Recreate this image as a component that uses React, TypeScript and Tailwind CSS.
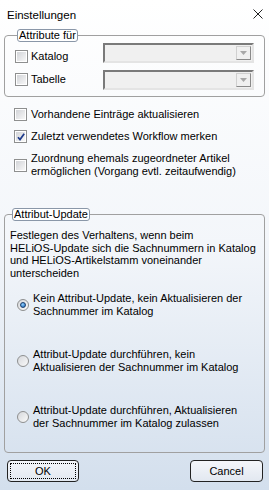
import React from "react";

function Check({ checked = false }: { checked?: boolean }) {
  return (
    <span className="relative flex h-[13px] w-[13px] shrink-0 items-center justify-center border border-[#8e8f8f] bg-white">
      <span className="h-[9px] w-[9px] bg-gradient-to-br from-[#d2d4d8] to-[#f7f7f7]" />
      {checked && (
        <svg className="absolute left-[1px] top-[1px]" width="10" height="10" viewBox="0 0 10 10">
          <path d="M2 5.2 L4 7.6 L8.2 1.8" fill="none" stroke="#1d3a8a" strokeWidth="1.7" />
        </svg>
      )}
    </span>
  );
}

function Radio({ checked = false }: { checked?: boolean }) {
  return (
    <span className="flex h-[12px] w-[12px] shrink-0 items-center justify-center rounded-full border border-[#8e8f8f] bg-gradient-to-br from-[#d6d8dc] to-[#fafafa]">
      {checked && (
        <span className="h-[6px] w-[6px] rounded-full border border-[#1b3f6e] bg-[radial-gradient(circle_at_40%_35%,#8fd0ff,#1a64b8)]" />
      )}
    </span>
  );
}

function Combo() {
  return (
    <div className="flex h-[20px] flex-1 border-2 border-t-[#7a7a7a] border-l-[#7a7a7a] border-b-[#e4e4e4] border-r-[#e4e4e4] bg-[#f0f0f0]">
      <div className="flex-1" />
      <div className="my-[1px] mr-[1px] flex w-[15px] items-center justify-center border border-[#d0d0d0] border-b-[#8a8a8a] border-r-[#8a8a8a] bg-[#f0f0f0]">
        <svg width="7" height="4" viewBox="0 0 7 4">
          <path d="M0 0 H7 L3.5 4 Z" fill="#a8a8a8" />
        </svg>
      </div>
    </div>
  );
}

function Legend({ children }: { children: React.ReactNode }) {
  return (
    <legend className="ml-[2px] h-[13px] rounded-[3px] border border-[#8a97a8] bg-white px-[1px] leading-[11px]">
      {children}
    </legend>
  );
}

export default function App() {
  return (
    <div
      className="flex h-[490px] w-[269px] flex-col bg-gradient-to-b from-white via-[#f3f6fa] to-[#d3dfed] text-[11px] leading-[12.5px] text-black"
      style={{ fontFamily: '"Liberation Sans", Arial, sans-serif' }}
    >
      {/* title bar */}
      <div className="flex h-[29px] items-start justify-between pl-[7px] pr-[6px] pt-[8px]">
        <span className="text-[11.5px] leading-[14px]">Einstellungen</span>
        <svg className="mt-[1px]" width="10" height="10" viewBox="0 0 10 10">
          <path d="M0.5 0.5 L9.5 9.5 M9.5 0.5 L0.5 9.5" stroke="#222" strokeWidth="1" />
        </svg>
      </div>

      {/* Attribute für */}
      <fieldset className="mx-[4px] rounded-[4px] border border-[#a0a0a0] px-[10px] pb-[6px] pt-[1px]">
        <Legend>Attribute für</Legend>
        <div className="flex items-start">
          <div className="flex w-[88px] items-center gap-[3px] pt-[7px]">
            <Check />
            <span>Katalog</span>
          </div>
          <Combo />
        </div>
        <div className="mt-[7px] flex items-start">
          <div className="flex w-[88px] items-center gap-[3px] pt-[3px]">
            <Check />
            <span>Tabelle</span>
          </div>
          <Combo />
        </div>
      </fieldset>

      {/* options */}
      <div className="mt-[11px] flex flex-col gap-[9px] pl-[14px]">
        <div className="flex items-center gap-[4px]">
          <Check />
          <span className="leading-[13px]">Vorhandene Einträge aktualisieren</span>
        </div>
        <div className="flex items-center gap-[4px]">
          <Check checked />
          <span className="leading-[13px]">Zuletzt verwendetes Workflow merken</span>
        </div>
        <div className="flex items-center gap-[4px]">
          <Check />
          <span className="leading-[13px]">
            Zuordnung ehemals zugeordneter Artikel
            <br />
            ermöglichen (Vorgang evtl. zeitaufwendig)
          </span>
        </div>
      </div>

      {/* Attribut-Update */}
      <fieldset className="mx-[4px] mt-[30px] rounded-[4px] border border-[#a0a0a0] pb-[23px] pl-[5px] pr-[6px] pt-[8px]">
        <Legend>Attribut-Update</Legend>
        <p>
          Festlegen des Verhaltens, wenn beim
          <br />
          HELiOS-Update sich die Sachnummern in Katalog
          <br />
          und HELiOS-Artikelstamm voneinander
          <br />
          unterscheiden
        </p>
        <div className="mt-[13px] flex flex-col gap-[31px] pl-[7px]">
          <div className="flex items-center gap-[4px]">
            <Radio checked />
            <span>
              Kein Attribut-Update, kein Aktualisieren der
              <br />
              Sachnummer im Katalog
            </span>
          </div>
          <div className="flex items-center gap-[4px]">
            <Radio />
            <span>
              Attribut-Update durchführen, kein
              <br />
              Aktualisieren der Sachnummer im Katalog
            </span>
          </div>
          <div className="flex items-center gap-[4px]">
            <Radio />
            <span>
              Attribut-Update durchführen, Aktualisieren
              <br />
              der Sachnummer im Katalog zulassen
            </span>
          </div>
        </div>
      </fieldset>

      {/* buttons */}
      <div className="mt-[7px] flex justify-between pl-[7px] pr-[6px]">
        <button className="flex h-[22px] w-[72px] items-center justify-center rounded-[4px] border border-[#222] bg-gradient-to-b from-[#f4f6fa] to-[#e2e8f0] p-[2px]">
          <span className="flex h-full w-full items-center justify-center border border-dotted border-black">
            OK
          </span>
        </button>
        <button className="flex h-[22px] w-[73px] items-center justify-center rounded-[4px] border border-[#222] bg-gradient-to-b from-[#f4f6fa] to-[#e2e8f0]">
          Cancel
        </button>
      </div>
    </div>
  );
}
